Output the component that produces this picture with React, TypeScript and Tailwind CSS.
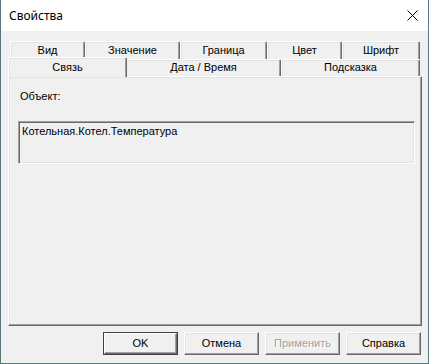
import React from "react";

const font = { fontFamily: '"Liberation Sans", Arial, sans-serif' };

function BackTab({ w, label }: { w: number; label: string }) {
  return (
    <div
      className="h-[18px] border-t border-l border-r border-t-white border-l-white border-r-[#696969] shadow-[inset_-1px_0_0_#a0a0a0,inset_1px_1px_0_#e3e3e3] rounded-tl-[2px] rounded-tr-[2px] flex items-start justify-center pt-[2px] text-[11px] leading-[13px] text-black"
      style={{ width: w }}
    >
      {label}
    </div>
  );
}

function Btn({ label, def, disabled }: { label: string; def?: boolean; disabled?: boolean }) {
  if (def) {
    return (
      <div className="w-[75px] h-[23px] border border-[#404040] flex">
        <div className="flex-1 border-t border-l border-r border-b border-t-white border-l-white border-r-[#696969] border-b-[#696969] shadow-[inset_-1px_-1px_0_#a0a0a0] flex items-center justify-center text-[11px] text-black">
          {label}
        </div>
      </div>
    );
  }
  return (
    <div className="w-[75px] h-[23px] border-t border-l border-r border-b border-t-white border-l-white border-r-[#696969] border-b-[#696969] shadow-[inset_-1px_-1px_0_#a0a0a0,inset_1px_1px_0_#e3e3e3] flex items-center justify-center text-[11px]">
      <span className={disabled ? "text-[#a0a0a0] [text-shadow:1px_1px_0_#ffffff]" : "text-black"}>{label}</span>
    </div>
  );
}

export default function App() {
  return (
    <div className="w-[429px] h-[364px] bg-[#f0f0f0] border-l border-r border-b border-[#57787c] flex flex-col overflow-hidden" style={font}>
      <div className="h-[31px] bg-white flex items-center justify-between pl-[8px] pr-[9px] shrink-0">
        <span className="text-[12px] text-black" style={{ fontFamily: '"Noto Sans", "Open Sans", sans-serif' }}>
          Свойства
        </span>
        <svg width="11" height="11" viewBox="0 0 11 11" className="mr-[1px]">
          <path d="M0.5 0.5 L10.5 10.5 M10.5 0.5 L0.5 10.5" stroke="#000" strokeWidth="1" fill="none" />
        </svg>
      </div>
      <div className="flex flex-col pt-[10px] px-[7px]">
        <div className="flex pl-[2px] h-[18px]">
          <BackTab w={75} label="Вид" />
          <BackTab w={95} label="Значение" />
          <BackTab w={87} label="Граница" />
          <BackTab w={75} label="Цвет" />
          <BackTab w={78} label="Шрифт" />
        </div>
        <div className="flex h-[17px] items-end relative z-10">
          <div className="w-[119px] h-[20px] -mb-[1px] bg-[#f0f0f0] border-t border-l border-r border-t-white border-l-white border-r-[#696969] shadow-[inset_-1px_0_0_#a0a0a0,inset_1px_1px_0_#e3e3e3] rounded-tl-[2px] rounded-tr-[2px] flex justify-center pt-[3px] text-[11px] leading-[13px] text-black">
            Связь
          </div>
          <div className="w-[154px] h-[17px] border-t border-r border-t-white border-r-[#696969] shadow-[inset_-1px_0_0_#a0a0a0,inset_0_1px_0_#e3e3e3] rounded-tr-[2px] flex justify-center pt-[1px] text-[11px] leading-[13px] text-black">
            Дата / Время
          </div>
          <div className="w-[139px] h-[17px] border-t border-l border-r border-t-white border-l-white border-r-[#696969] shadow-[inset_-1px_0_0_#a0a0a0,inset_1px_1px_0_#e3e3e3] rounded-tl-[2px] rounded-tr-[2px] flex justify-center pt-[1px] text-[11px] leading-[13px] text-black">
            Подсказка
          </div>
        </div>
        <div className="h-[250px] w-[414px] border-t border-l border-r border-b border-t-white border-l-white border-r-[#696969] border-b-[#696969] shadow-[inset_-1px_-1px_0_#a0a0a0,inset_1px_1px_0_#e3e3e3] pt-[13px] px-[9px] flex flex-col">
          <div className="pl-[2px] text-[11px] leading-[13px] text-black">Объект:</div>
          <div className="mt-[18px] h-[43px] w-[397px] border-t border-l border-r border-b border-t-[#a0a0a0] border-l-[#a0a0a0] border-r-white border-b-white shadow-[inset_1px_1px_0_#696969,inset_-1px_-1px_0_#e3e3e3] pl-[3px] pt-[3px] text-[11px] leading-[13px] text-black">
            Котельная.Котел.Температура
          </div>
        </div>
        <div className="flex justify-end gap-[6px] mt-[6px]">
          <Btn label="OK" def />
          <Btn label="Отмена" />
          <Btn label="Применить" disabled />
          <Btn label="Справка" />
        </div>
      </div>
    </div>
  );
}
